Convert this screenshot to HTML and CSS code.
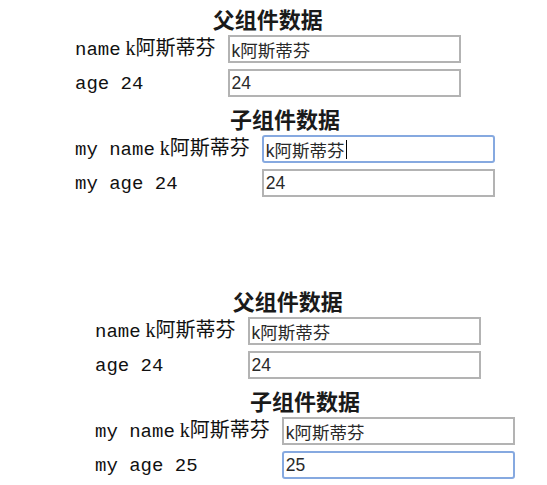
FILE: index.html
```html
<!DOCTYPE html>
<html lang="zh">
<head>
    <meta charset="UTF-8">
    <meta name="viewport" content="width=device-width, initial-scale=1.0">
    <title>父子组件数据</title>
    <link rel="stylesheet" href="styles.css">
</head>
<body>

    <!-- Eerste demo -->
    <div class="demo">
        <div class="panel">
            <h3>父组件数据</h3>
            <div class="form">
                <label class="cell"><span class="key">name</span> <span class="val">k阿斯蒂芬</span></label>
                <input class="field" type="text" value="k阿斯蒂芬">
                <label class="cell"><span class="key">age 24</span></label>
                <input class="field" type="text" value="24">
            </div>
        </div>
        <div class="panel child">
            <h3>子组件数据</h3>
            <div class="form">
                <label class="cell"><span class="key">my name</span> <span class="val">k阿斯蒂芬</span></label>
                <span class="wrap">
                    <input class="field focus" type="text" value="k阿斯蒂芬">
                    <i class="caret"></i>
                </span>
                <label class="cell"><span class="key">my age 24</span></label>
                <input class="field" type="text" value="24">
            </div>
        </div>
    </div>

    <!-- Tweede demo -->
    <div class="demo second">
        <div class="panel">
            <h3>父组件数据</h3>
            <div class="form">
                <label class="cell"><span class="key">name</span> <span class="val">k阿斯蒂芬</span></label>
                <input class="field" type="text" value="k阿斯蒂芬">
                <label class="cell"><span class="key">age 24</span></label>
                <input class="field" type="text" value="24">
            </div>
        </div>
        <div class="panel child">
            <h3>子组件数据</h3>
            <div class="form">
                <label class="cell"><span class="key">my name</span> <span class="val">k阿斯蒂芬</span></label>
                <input class="field" type="text" value="k阿斯蒂芬">
                <label class="cell"><span class="key">my age 25</span></label>
                <input class="field focus" type="text" value="25">
            </div>
        </div>
    </div>

</body>
</html>
```

FILE: styles.css
```css
/* Algemene bodystijl */
body {
    margin: 0;
    padding: 2px 0 0;
    background-color: #fff;
    color: #111;
    font-family: 'Liberation Serif', 'Noto Sans CJK SC', serif;
}

/* Demo blokken */
.demo {
    display: flex;
    flex-direction: column;
    align-items: flex-start;
    margin-left: 75px;
}

.demo.second {
    margin-left: 95px;
    margin-top: 87px;
}

.panel h3 {
    margin: 0 0 1px;
    font-family: 'Noto Sans CJK SC', sans-serif;
    font-size: 22px;
    font-weight: bold;
    line-height: 32px;
    text-align: center;
    color: #1a1a1a;
}

.panel.child {
    margin-top: 5px;
}

/* Formulier als tabel */
.form {
    display: grid;
    grid-template-columns: auto auto;
    column-gap: 12px;
    row-gap: 6px;
    align-items: center;
}

.cell {
    font-size: 20px;
    line-height: 24px;
    white-space: pre;
}

.key {
    font-family: 'Liberation Mono', monospace;
    font-size: 19px;
}

.val {
    font-family: 'Liberation Serif', 'Noto Sans CJK SC', serif;
    font-size: 20px;
}

/* Invoer velden */
.field {
    box-sizing: border-box;
    width: 233px;
    height: 28px;
    margin: 0;
    padding: 0 2px;
    border: 2px solid #b3b3b3;
    font-family: 'Liberation Sans', 'Noto Sans CJK SC', sans-serif;
    font-size: 17.5px;
    color: #2a2a2a;
    background-color: #fff;
    outline: none;
}

.field.focus {
    border-color: #86a9e0;
    border-radius: 3px;
}

.wrap {
    position: relative;
    display: block;
}

.caret {
    position: absolute;
    left: 84px;
    top: 5px;
    width: 1px;
    height: 19px;
    background-color: #000;
}
```
